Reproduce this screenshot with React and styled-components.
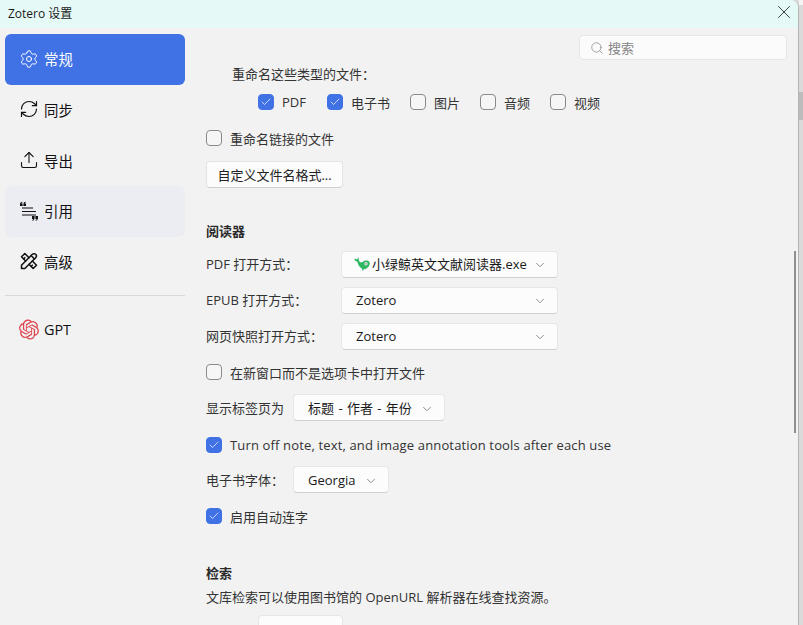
import React from "react";
import styled, { createGlobalStyle } from "styled-components";
import { Search, X, ChevronDown, Check, Settings, RefreshCw, Upload } from "lucide-react";
import { TbTools } from "react-icons/tb";

const Global = createGlobalStyle`
  *, *::before, *::after { box-sizing: border-box; }
  html, body { margin: 0; padding: 0; height: 625px; overflow: hidden; background: #fff; }
`;

const FONT = `"Open Sans", "Noto Sans CJK SC", sans-serif`;

const Stage = styled.div`
  position: relative;
  width: 803px;
  height: 625px;
  display: flex;
  background: #dadada;
  overflow: hidden;
`;

const EdgeBand = styled.div`
  position: absolute;
  right: 0;
  top: 92px;
  width: 4px;
  height: 28px;
  background: #bcbcbc;
`;

const EdgeTop = styled.div`
  position: absolute;
  right: 0;
  top: 0;
  width: 4px;
  height: 5px;
  background: #f4f4f4;
`;

const Win = styled.div`
  position: relative;
  z-index: 1;
  width: 799px;
  flex: none;
  height: 625px;
  display: flex;
  flex-direction: column;
  background: #f2f2f2;
  font-family: ${FONT};
  color: #1a1a1a;
  border-top-right-radius: 8px;
  border-right: 1px solid #b4b4b4;
  overflow: hidden;
`;

const TitleBar = styled.div`
  height: 28px;
  flex: none;
  background: #e5f9f6;
  display: flex;
  align-items: center;
  justify-content: space-between;
  padding: 0 3px 2px 8px;
  font-size: 12px;
`;

const CloseBtn = styled.span`
  display: flex;
  margin-top: -2px;
  color: #1a1a1a;
`;

const Body = styled.div`
  flex: 1;
  display: flex;
  min-height: 0;
`;

const Side = styled.nav`
  width: 180px;
  flex: none;
  margin-left: 5px;
  padding-top: 6px;
  display: flex;
  flex-direction: column;
`;

const NavItem = styled.div`
  height: 50.67px;
  flex: none;
  border-radius: 6px;
  display: flex;
  align-items: center;
  gap: 5px;
  padding: 0 0 1px 14px;
  font-size: 14.4px;
  color: ${p => (p.$active ? "#fff" : "#111")};
  background: ${p => (p.$active ? "#4072e5" : p.$hover ? "#ecedf2" : "transparent")};
`;

const NavIcon = styled.span`
  width: 20px;
  height: 20px;
  display: flex;
  align-items: center;
  justify-content: center;
  flex: none;
`;

const NavRule = styled.div`
  height: 1px;
  flex: none;
  background: #d8d8d8;
  margin: 8px 0 8px;
`;

const Main = styled.main`
  flex: 1;
  position: relative;
  padding: 0 0 0 21px;
  min-width: 0;
`;

const SearchBox = styled.div`
  position: absolute;
  right: 11px;
  top: 7px;
  width: 208px;
  height: 25px;
  background: #fbfbfb;
  border: 1px solid #e6e6e6;
  border-radius: 4px;
  display: flex;
  align-items: center;
  gap: 4px;
  padding-left: 10px;
  font-size: 13px;
  color: #858585;
`;

const Content = styled.div`
  display: flex;
  flex-direction: column;
  padding-top: 37px;
`;

const Label = styled.div`
  font-size: 13px;
  line-height: 18px;
  color: #333;
  white-space: nowrap;
  margin-top: ${p => p.$mt || 0}px;
`;

const IndentLabel = styled(Label)`
  padding-left: 26px;
`;

const TypeRow = styled.div`
  display: flex;
  margin: 10px 0 0 52px;
  height: 18px;
`;

const CheckRow = styled.label`
  display: flex;
  align-items: center;
  gap: 8px;
  height: 18px;
  flex: none;
  font-size: 13px;
  color: #333;
  white-space: nowrap;
  width: ${p => (p.$w ? `${p.$w}px` : "auto")};
  margin-top: ${p => p.$mt || 0}px;
`;

const WideText = styled.span`
  letter-spacing: 0.15px;
`;

const Box = styled.span`
  width: 16px;
  height: 16px;
  border-radius: 4px;
  flex: none;
  display: flex;
  align-items: center;
  justify-content: center;
  color: #fff;
  background: ${p => (p.$on ? "#4072e5" : "#f6f6f6")};
  border: 1px solid ${p => (p.$on ? "#4072e5" : "#8a8a8a")};
`;

const Button = styled.div`
  align-self: flex-start;
  margin-top: 14px;
  height: 27px;
  width: 137px;
  flex: none;
  background: #fcfcfc;
  border: 1px solid #e3e3e3;
  border-bottom-color: #cfcfcf;
  border-radius: 4px;
  display: flex;
  align-items: center;
  justify-content: center;
  font-size: 13px;
  color: #222;
`;

const SectionTitle = styled.h3`
  margin: ${p => p.$mt}px 0 0;
  font-size: 13px;
  line-height: 18px;
  font-weight: 700;
  color: #2a2a2a;
`;

const FieldRow = styled.div`
  display: flex;
  flex: none;
  align-items: center;
  margin-top: ${p => p.$mt}px;
`;

const FieldLabel = styled(Label)`
  width: ${p => p.$w}px;
  flex: none;
  margin-bottom: ${p => (p.$lift ? 2 : 0)}px;
`;

const Select = styled.div`
  width: ${p => p.$w}px;
  height: 27px;
  background: #fcfcfc;
  border: 1px solid #e6e6e6;
  border-bottom-color: #d0d0d0;
  border-radius: 4px;
  display: flex;
  align-items: center;
  justify-content: space-between;
  padding: 0 10px ${p => (p.$lift ? 2 : 0)}px ${p => p.$pl || 14}px;
  font-size: 13px;
  color: #1a1a1a;
  white-space: nowrap;
  flex: none;
  word-spacing: ${p => p.$ws || 0}px;
`;

const SelectText = styled.span`
  display: flex;
  align-items: center;
  gap: 2px;
`;

const Caret = styled(ChevronDown)`
  color: #555;
  flex: none;
  margin-top: 2px;
`;

const Thumb = styled.div`
  position: absolute;
  right: 2px;
  top: ${p => p.$top}px;
  width: 2px;
  height: ${p => p.$h}px;
  background: ${p => p.$c};
`;

const CutSelect = styled(Select)`
  height: 10px;
  border-bottom: none;
  border-radius: 4px 4px 0 0;
`;

const Tick = () => <Check size={12} strokeWidth={1.4} />;
const Arrow = () => <Caret size={14} strokeWidth={1.1} />;

const QuoteIcon = () => (
  <svg width="20" height="20" viewBox="0 0 20 20">
    <g fill="#111">
      <path d="M1 5h2.600V2.500H2.400c0-.5.300-.9 1-1V.8C1.800 1 1 2 1 3.500z" />
      <path d="M4.400 5H7V2.500H5.800c0-.5.300-.9 1-1V.8C5.200 1 4.400 2 4.400 3.500z" />
      <path d="M16.400 16H19v2c0 1.500-.8 2.500-2.400 2.700v-.7c.7-.1 1-.5 1-1h-1.200z" transform="translate(0 -1)" />
      <path d="M13 16h2.600v2c0 1.500-.8 2.500-2.400 2.700v-.7c.7-.1 1-.5 1-1H13z" transform="translate(0 -1)" />
    </g>
    <path d="M3 7h11M3 10.500h14M3 14h14" stroke="#111" strokeWidth="1.200" />
  </svg>
);

const GptIcon = () => (
  <svg width="21" height="21" viewBox="0 0 24 24" fill="#e0464f">
    <path d="M22.282 9.821a5.985 5.985 0 0 0-.516-4.91 6.046 6.046 0 0 0-6.51-2.9A6.065 6.065 0 0 0 4.981 4.18a5.985 5.985 0 0 0-3.998 2.9 6.046 6.046 0 0 0 .743 7.097 5.98 5.98 0 0 0 .51 4.911 6.051 6.051 0 0 0 6.515 2.9A5.985 5.985 0 0 0 13.26 24a6.056 6.056 0 0 0 5.772-4.206 5.99 5.99 0 0 0 3.997-2.9 6.056 6.056 0 0 0-.747-7.073zM13.26 22.43a4.476 4.476 0 0 1-2.876-1.04l.141-.081 4.779-2.758a.795.795 0 0 0 .392-.681v-6.737l2.02 1.168a.071.071 0 0 1 .038.052v5.583a4.504 4.504 0 0 1-4.494 4.494zM3.6 18.304a4.47 4.47 0 0 1-.535-3.014l.142.085 4.783 2.759a.771.771 0 0 0 .78 0l5.843-3.369v2.332a.08.08 0 0 1-.033.062L9.74 19.95a4.5 4.5 0 0 1-6.14-1.646zM2.34 7.896a4.485 4.485 0 0 1 2.366-1.973V11.6a.766.766 0 0 0 .388.676l5.815 3.355-2.02 1.168a.076.076 0 0 1-.071 0l-4.83-2.786A4.504 4.504 0 0 1 2.34 7.872zm16.597 3.855l-5.833-3.387L15.119 7.2a.076.076 0 0 1 .071 0l4.83 2.791a4.494 4.494 0 0 1-.676 8.105v-5.678a.79.79 0 0 0-.407-.667zm2.01-3.023l-.141-.085-4.774-2.782a.776.776 0 0 0-.785 0L9.409 9.23V6.897a.066.066 0 0 1 .028-.061l4.83-2.787a4.5 4.5 0 0 1 6.68 4.66zm-12.64 4.135l-2.02-1.164a.08.08 0 0 1-.038-.057V6.075a4.5 4.5 0 0 1 7.375-3.453l-.142.08L8.704 5.46a.795.795 0 0 0-.393.681zm1.097-2.365l2.602-1.5 2.607 1.5v2.999l-2.597 1.5-2.607-1.5z" />
  </svg>
);

const WhaleIcon = () => (
  <svg width="16" height="14" viewBox="0 0 16 14">
    <path d="M.5 1.500l2.500 1L4.500 .5 5 3.500C5.500 5 6.500 5.800 8 5.300c1-.4 2-1.500 3.500-1.800 1.800-.3 3.200.3 3.900 1.400.8 1.400.3 3.200-.7 4.500-1.200 1.600-3 2.600-4.800 2.800L8.500 14 8 11.500C5.800 10.500 4 8 3.500 5L.8 3.500z" fill="#2fb864" />
    <circle cx="12" cy="6.800" r="1.700" fill="#e8e8e8" />
    <circle cx="12" cy="6.800" r=".6" fill="#555" />
  </svg>
);

const types = [
  ["PDF", true, 69],
  ["电子书", true, 83],
  ["图片", false, 70],
  ["音频", false, 70],
  ["视频", false, 70],
];

export default function App() {
  return (
    <Stage>
      <Global />
      <EdgeTop />
      <EdgeBand />
      <Win>
        <TitleBar>
          <span>Zotero 设置</span>
          <CloseBtn><X size={22} strokeWidth={0.9} /></CloseBtn>
        </TitleBar>
        <Body>
          <Side>
            <NavItem $active>
              <NavIcon><Settings size={20} strokeWidth={1.2} /></NavIcon>常规
            </NavItem>
            <NavItem>
              <NavIcon><RefreshCw size={20} strokeWidth={1.4} /></NavIcon>同步
            </NavItem>
            <NavItem>
              <NavIcon><Upload size={20} strokeWidth={1.3} /></NavIcon>导出
            </NavItem>
            <NavItem $hover>
              <NavIcon><QuoteIcon /></NavIcon>引用
            </NavItem>
            <NavItem>
              <NavIcon><TbTools size={22} strokeWidth={1.8} /></NavIcon>高级
            </NavItem>
            <NavRule />
            <NavItem>
              <NavIcon><GptIcon /></NavIcon>GPT
            </NavItem>
          </Side>
          <Main>
            <SearchBox>
              <Search size={14} strokeWidth={1.3} />搜索
            </SearchBox>
            <Content>
              <IndentLabel>重命名这些类型的文件：</IndentLabel>
              <TypeRow>
                {types.map(([t, on, w]) => (
                  <CheckRow key={t} $w={w}>
                    <Box $on={on}>{on && <Tick />}</Box>{t}
                  </CheckRow>
                ))}
              </TypeRow>
              <CheckRow $mt={18}><Box />重命名链接的文件</CheckRow>
              <Button>自定义文件名格式...</Button>
              <SectionTitle $mt={34}>阅读器</SectionTitle>
              <FieldRow $mt={11}>
                <FieldLabel $w={135} $lift>PDF 打开方式：</FieldLabel>
                <Select $w={217} $pl={12} $lift>
                  <SelectText><WhaleIcon />小绿鲸英文文献阅读器.exe</SelectText>
                  <Arrow />
                </Select>
              </FieldRow>
              <FieldRow $mt={9}>
                <FieldLabel $w={135} $lift>EPUB 打开方式：</FieldLabel>
                <Select $w={217} $lift>Zotero<Arrow /></Select>
              </FieldRow>
              <FieldRow $mt={9}>
                <FieldLabel $w={135} $lift>网页快照打开方式：</FieldLabel>
                <Select $w={217} $lift>Zotero<Arrow /></Select>
              </FieldRow>
              <CheckRow $mt={13}><Box />在新窗口而不是选项卡中打开文件</CheckRow>
              <FieldRow $mt={13}>
                <FieldLabel $w={87}>显示标签页为</FieldLabel>
                <Select $w={152} $ws={1}>标题 - 作者 - 年份<Arrow /></Select>
              </FieldRow>
              <CheckRow $mt={15}><Box $on><Tick /></Box><WideText>Turn off note, text, and image annotation tools after each use</WideText></CheckRow>
              <FieldRow $mt={12}>
                <FieldLabel $w={87}>电子书字体：</FieldLabel>
                <Select $w={96}>Georgia<Arrow /></Select>
              </FieldRow>
              <CheckRow $mt={14}><Box $on><Tick /></Box>启用自动连字</CheckRow>
              <SectionTitle $mt={39}>检索</SectionTitle>
              <Label $mt={6}>文库检索可以使用图书馆的 OpenURL 解析器在线查找资源。</Label>
              <FieldRow $mt={9}>
                <FieldLabel $w={52} />
                <CutSelect $w={85} />
              </FieldRow>
            </Content>
            <Thumb $top={223} $h={182} $c="#8f8f8f" />
          </Main>
        </Body>
      </Win>
    </Stage>
  );
}
